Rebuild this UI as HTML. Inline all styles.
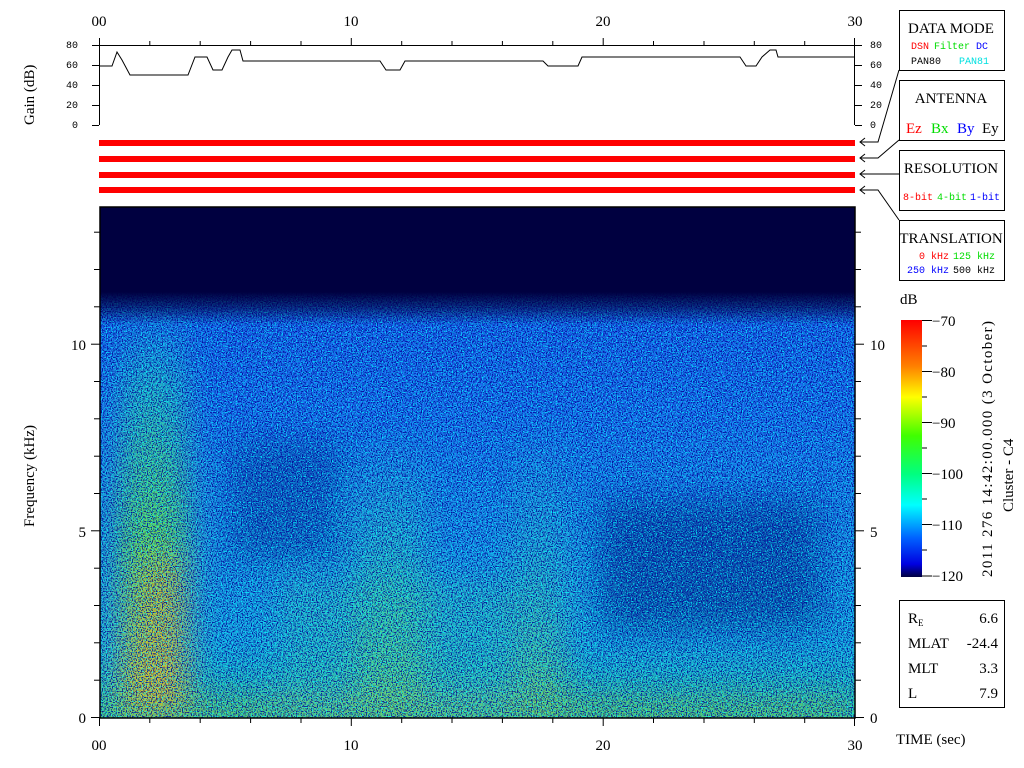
<!DOCTYPE html>
<html><head><meta charset="utf-8"><style>
html,body{margin:0;padding:0;background:#fff;width:1024px;height:768px;overflow:hidden}
svg{display:block}
text{font-family:"Liberation Serif",serif;font-size:15px}
.m{font-family:"Liberation Mono",monospace;font-size:10px}
</style></head><body>
<svg width="1024" height="768" viewBox="0 0 1024 768" xmlns="http://www.w3.org/2000/svg">
<defs>
<linearGradient id="vert" x1="0" y1="0" x2="0" y2="1">
<stop offset="0" stop-color="#1a50e8"/>
<stop offset="0.4" stop-color="#1e70f0"/>
<stop offset="0.85" stop-color="#20a8e0"/>
<stop offset="1" stop-color="#30c8a0"/>
</linearGradient>
<linearGradient id="topfade" x1="0" y1="0" x2="0" y2="1">
<stop offset="0" stop-color="#000040"/>
<stop offset="0.72" stop-color="#000040"/>
<stop offset="0.85" stop-color="#000040" stop-opacity="0.6"/>
<stop offset="1" stop-color="#000040" stop-opacity="0"/>
</linearGradient>
<linearGradient id="band1" x1="0" y1="0" x2="0" y2="1">
<stop offset="0" stop-color="#20c0e0" stop-opacity="0"/>
<stop offset="0.2" stop-color="#30d0b0" stop-opacity="0.7"/>
<stop offset="0.6" stop-color="#70e040"/>
<stop offset="1" stop-color="#f0d020"/>
</linearGradient>
<linearGradient id="band2" x1="0" y1="0" x2="0" y2="1">
<stop offset="0" stop-color="#30d0c0" stop-opacity="0"/>
<stop offset="0.5" stop-color="#40d8a0" stop-opacity="0.6"/>
<stop offset="1" stop-color="#90e040"/>
</linearGradient>
<linearGradient id="cb" x1="0" y1="0" x2="0" y2="1">
<stop offset="0" stop-color="#ff0000"/>
<stop offset="0.18" stop-color="#ff8000"/>
<stop offset="0.3" stop-color="#ffff00"/>
<stop offset="0.45" stop-color="#40ff00"/>
<stop offset="0.6" stop-color="#00ff80"/>
<stop offset="0.72" stop-color="#00ffff"/>
<stop offset="0.85" stop-color="#0060ff"/>
<stop offset="0.95" stop-color="#0000e0"/>
<stop offset="1" stop-color="#000040"/>
</linearGradient>
<clipPath id="pc"><rect x="100" y="207" width="755" height="511"/></clipPath>
<filter id="blur" x="-20%" y="-20%" width="140%" height="140%"><feGaussianBlur stdDeviation="16"/></filter>
<filter id="ndark" x="0" y="0" width="100%" height="100%">
<feTurbulence type="fractalNoise" baseFrequency="0.8" numOctaves="1" seed="3"/>
<feColorMatrix values="0 0 0 0 0  0 0 0 0 0  0 0 0 0 0.3  7 0 0 0 -3.4"/>
</filter>
<filter id="nbright" x="0" y="0" width="100%" height="100%">
<feTurbulence type="fractalNoise" baseFrequency="0.8" numOctaves="1" seed="11"/>
<feColorMatrix values="0 0 0 0 0  0 0 0 0 0.95  0 0 0 0 1  7 0 0 0 -3.5"/>
</filter>
</defs>

<g clip-path="url(#pc)">
<rect x="100" y="207" width="755" height="511" fill="url(#vert)"/>
<g filter="url(#blur)">
<rect x="120" y="300" width="66" height="418" fill="url(#band1)"/>
<rect x="355" y="430" width="70" height="288" fill="url(#band2)"/>
<rect x="515" y="420" width="50" height="298" fill="url(#band2)" opacity="0.7"/>
<rect x="280" y="580" width="240" height="138" fill="#40d0a0" opacity="0.45"/>
<rect x="600" y="500" width="220" height="130" fill="#0a1870" opacity="0.5"/>
<rect x="230" y="440" width="110" height="120" fill="#0a1870" opacity="0.35"/>
<rect x="100" y="702" width="755" height="20" fill="#a0d020" opacity="0.8"/>
<rect x="145" y="560" width="35" height="150" fill="#f0b020" opacity="0.7"/>
</g>
<rect x="100" y="207" width="755" height="511" filter="url(#nbright)" opacity="0.8"/>
<rect x="100" y="207" width="755" height="511" filter="url(#ndark)" opacity="0.85"/>
<rect x="100" y="207" width="755" height="118" fill="url(#topfade)"/>
</g>
<rect x="100" y="207" width="755" height="511" fill="none" stroke="#000" stroke-width="1.5"/>

<line x1="99" y1="45.5" x2="855" y2="45.5" stroke="#000"/>
<line x1="99.5" y1="45" x2="99.5" y2="125" stroke="#000"/>
<line x1="854.5" y1="45" x2="854.5" y2="125" stroke="#000"/>
<polyline fill="none" stroke="#000" points="100,66 112,66 117,52 122,60 130,75 188,75 195,57 207,57 213,70 222,70 228,57 232,50 240,50 243,61 380,61 386,70 400,70 405,61 543,61 548,66 578,66 582,57 740,57 746,66 756,66 762,57 770,50 776,50 778,57 855,57"/>
<g stroke="#000">
<line x1="92" y1="45.5" x2="99" y2="45.5"/><line x1="92" y1="65.5" x2="99" y2="65.5"/><line x1="92" y1="85.5" x2="99" y2="85.5"/><line x1="92" y1="105.5" x2="99" y2="105.5"/><line x1="92" y1="125.5" x2="99" y2="125.5"/>
<line x1="855" y1="45.5" x2="862" y2="45.5"/><line x1="855" y1="65.5" x2="862" y2="65.5"/><line x1="855" y1="85.5" x2="862" y2="85.5"/><line x1="855" y1="105.5" x2="862" y2="105.5"/><line x1="855" y1="125.5" x2="862" y2="125.5"/>
</g>
<g>
<text x="66" y="48" class="m">80</text><text x="66" y="68" class="m">60</text><text x="66" y="88" class="m">40</text><text x="66" y="108" class="m">20</text><text x="72" y="128" class="m">0</text>
<text x="870" y="48" class="m">80</text><text x="870" y="68" class="m">60</text><text x="870" y="88" class="m">40</text><text x="870" y="108" class="m">20</text><text x="870" y="128" class="m">0</text>
</g>
<text transform="translate(34,125) rotate(-90)">Gain (dB)</text>

<g stroke="#000">
<line x1="99.5" y1="38" x2="99.5" y2="45"/><line x1="149.8" y1="41" x2="149.8" y2="45"/><line x1="200.2" y1="41" x2="200.2" y2="45"/><line x1="250.6" y1="41" x2="250.6" y2="45"/><line x1="301" y1="41" x2="301" y2="45"/><line x1="351.3" y1="38" x2="351.3" y2="45"/><line x1="401.7" y1="41" x2="401.7" y2="45"/><line x1="452" y1="41" x2="452" y2="45"/><line x1="502.4" y1="41" x2="502.4" y2="45"/><line x1="552.8" y1="41" x2="552.8" y2="45"/><line x1="603.2" y1="38" x2="603.2" y2="45"/><line x1="653.5" y1="41" x2="653.5" y2="45"/><line x1="704" y1="41" x2="704" y2="45"/><line x1="754.3" y1="41" x2="754.3" y2="45"/><line x1="804.7" y1="41" x2="804.7" y2="45"/><line x1="854.5" y1="38" x2="854.5" y2="45"/>
<line x1="99.5" y1="718" x2="99.5" y2="726"/><line x1="149.8" y1="718" x2="149.8" y2="723"/><line x1="200.2" y1="718" x2="200.2" y2="723"/><line x1="250.6" y1="718" x2="250.6" y2="723"/><line x1="301" y1="718" x2="301" y2="723"/><line x1="351.3" y1="718" x2="351.3" y2="726"/><line x1="401.7" y1="718" x2="401.7" y2="723"/><line x1="452" y1="718" x2="452" y2="723"/><line x1="502.4" y1="718" x2="502.4" y2="723"/><line x1="552.8" y1="718" x2="552.8" y2="723"/><line x1="603.2" y1="718" x2="603.2" y2="726"/><line x1="653.5" y1="718" x2="653.5" y2="723"/><line x1="704" y1="718" x2="704" y2="723"/><line x1="754.3" y1="718" x2="754.3" y2="723"/><line x1="804.7" y1="718" x2="804.7" y2="723"/><line x1="854.5" y1="718" x2="854.5" y2="726"/>
<line x1="91" y1="717.5" x2="100" y2="717.5"/><line x1="94" y1="680.2" x2="100" y2="680.2"/><line x1="94" y1="642.8" x2="100" y2="642.8"/><line x1="94" y1="605.5" x2="100" y2="605.5"/><line x1="94" y1="568.2" x2="100" y2="568.2"/><line x1="91" y1="530.8" x2="100" y2="530.8"/><line x1="94" y1="493.5" x2="100" y2="493.5"/><line x1="94" y1="456.2" x2="100" y2="456.2"/><line x1="94" y1="418.8" x2="100" y2="418.8"/><line x1="94" y1="381.5" x2="100" y2="381.5"/><line x1="91" y1="344.2" x2="100" y2="344.2"/><line x1="94" y1="306.8" x2="100" y2="306.8"/><line x1="94" y1="269.5" x2="100" y2="269.5"/><line x1="94" y1="232.2" x2="100" y2="232.2"/>
<line x1="855" y1="717.5" x2="864" y2="717.5"/><line x1="855" y1="680.2" x2="861" y2="680.2"/><line x1="855" y1="642.8" x2="861" y2="642.8"/><line x1="855" y1="605.5" x2="861" y2="605.5"/><line x1="855" y1="568.2" x2="861" y2="568.2"/><line x1="855" y1="530.8" x2="864" y2="530.8"/><line x1="855" y1="493.5" x2="861" y2="493.5"/><line x1="855" y1="456.2" x2="861" y2="456.2"/><line x1="855" y1="418.8" x2="861" y2="418.8"/><line x1="855" y1="381.5" x2="861" y2="381.5"/><line x1="855" y1="344.2" x2="864" y2="344.2"/><line x1="855" y1="306.8" x2="861" y2="306.8"/><line x1="855" y1="269.5" x2="861" y2="269.5"/><line x1="855" y1="232.2" x2="861" y2="232.2"/>
</g>
<g text-anchor="middle">
<text x="99" y="26">00</text><text x="351" y="26">10</text><text x="603" y="26">20</text><text x="855" y="26">30</text>
<text x="99" y="750">00</text><text x="351" y="750">10</text><text x="603" y="750">20</text><text x="855" y="750">30</text>
</g>
<g text-anchor="end">
<text x="86" y="723">0</text><text x="86" y="537">5</text><text x="86" y="350">10</text>
</g>
<text x="870" y="723">0</text><text x="870" y="537">5</text><text x="870" y="350">10</text>
<text transform="translate(34,527) rotate(-90)">Frequency (kHz)</text>
<text x="896" y="744">TIME (sec)</text>

<g fill="#ff0000">
<rect x="99" y="140" width="756" height="6"/><rect x="99" y="156" width="756" height="6"/><rect x="99" y="172" width="756" height="6"/><rect x="99" y="187" width="756" height="6"/>
</g>
<g fill="none" stroke="#000">
<polyline points="899,70 878,142 860,142"/><polyline points="865,138 860,142 865,146"/>
<polyline points="899,140 878,158 860,158"/><polyline points="865,154 860,158 865,162"/>
<polyline points="899,174 860,174"/><polyline points="865,170 860,174 865,178"/>
<polyline points="899,220 878,190 860,190"/><polyline points="865,186 860,190 865,194"/>
</g>

<g fill="#fff" stroke="#000" stroke-width="1">
<rect x="899.5" y="10.5" width="105" height="60"/>
<rect x="899.5" y="80.5" width="105" height="60"/>
<rect x="899.5" y="150.5" width="105" height="60"/>
<rect x="899.5" y="220.5" width="105" height="60"/>
<rect x="899.5" y="600.5" width="105" height="107"/>
</g>
<g text-anchor="middle">
<text x="951" y="33">DATA MODE</text>
<text x="951" y="103">ANTENNA</text>
<text x="951" y="173">RESOLUTION</text>
<text x="951" y="243" font-size="14">TRANSLATION</text>
</g>
<text x="911" y="49" class="m" fill="#ff0000">DSN</text><text x="934" y="49" class="m" fill="#00dd00">Filter</text><text x="976" y="49" class="m" fill="#0000ff">DC</text>
<text x="911" y="64" class="m" fill="#000">PAN80</text><text x="959" y="64" class="m" fill="#00e0e0">PAN81</text>
<text x="906" y="133" fill="#ff0000">Ez</text><text x="931" y="133" fill="#00dd00">Bx</text><text x="957" y="133" fill="#0000ff">By</text><text x="982" y="133" fill="#000">Ey</text>
<text x="903" y="200" class="m" fill="#ff0000">8-bit</text><text x="937" y="200" class="m" fill="#00dd00">4-bit</text><text x="970" y="200" class="m" fill="#0000ff">1-bit</text>
<text x="919" y="259" class="m" fill="#ff0000">0 kHz</text><text x="953" y="259" class="m" fill="#00dd00">125 kHz</text>
<text x="907" y="273" class="m" fill="#0000ff">250 kHz</text><text x="953" y="273" class="m" fill="#000">500 kHz</text>

<text x="900" y="304">dB</text>
<rect x="901" y="320" width="21" height="257" fill="url(#cb)"/>
<g stroke="#000">
<line x1="922" y1="320.5" x2="932" y2="320.5"/><line x1="922" y1="346" x2="927" y2="346"/><line x1="922" y1="371.5" x2="932" y2="371.5"/><line x1="922" y1="397" x2="927" y2="397"/><line x1="922" y1="422.5" x2="932" y2="422.5"/><line x1="922" y1="448" x2="927" y2="448"/><line x1="922" y1="473.5" x2="932" y2="473.5"/><line x1="922" y1="499" x2="927" y2="499"/><line x1="922" y1="524.5" x2="932" y2="524.5"/><line x1="922" y1="550" x2="927" y2="550"/><line x1="922" y1="576" x2="932" y2="576"/>
</g>
<text x="932" y="326">−70</text><text x="932" y="377">−80</text><text x="932" y="428">−90</text><text x="932" y="479">−100</text><text x="932" y="530">−110</text><text x="932" y="581">−120</text>
<text transform="translate(992,577) rotate(-90)" textLength="256">2011 276 14:42:00.000 (3 October)</text>
<text transform="translate(1013,512) rotate(-90)">Cluster - C4</text>

<text x="908" y="623">R<tspan font-size="9" dy="3">E</tspan></text><text x="998" y="623" text-anchor="end">6.6</text>
<text x="908" y="648">MLAT</text><text x="998" y="648" text-anchor="end">-24.4</text>
<text x="908" y="673">MLT</text><text x="998" y="673" text-anchor="end">3.3</text>
<text x="908" y="698">L</text><text x="998" y="698" text-anchor="end">7.9</text>
</svg>
</body></html>
